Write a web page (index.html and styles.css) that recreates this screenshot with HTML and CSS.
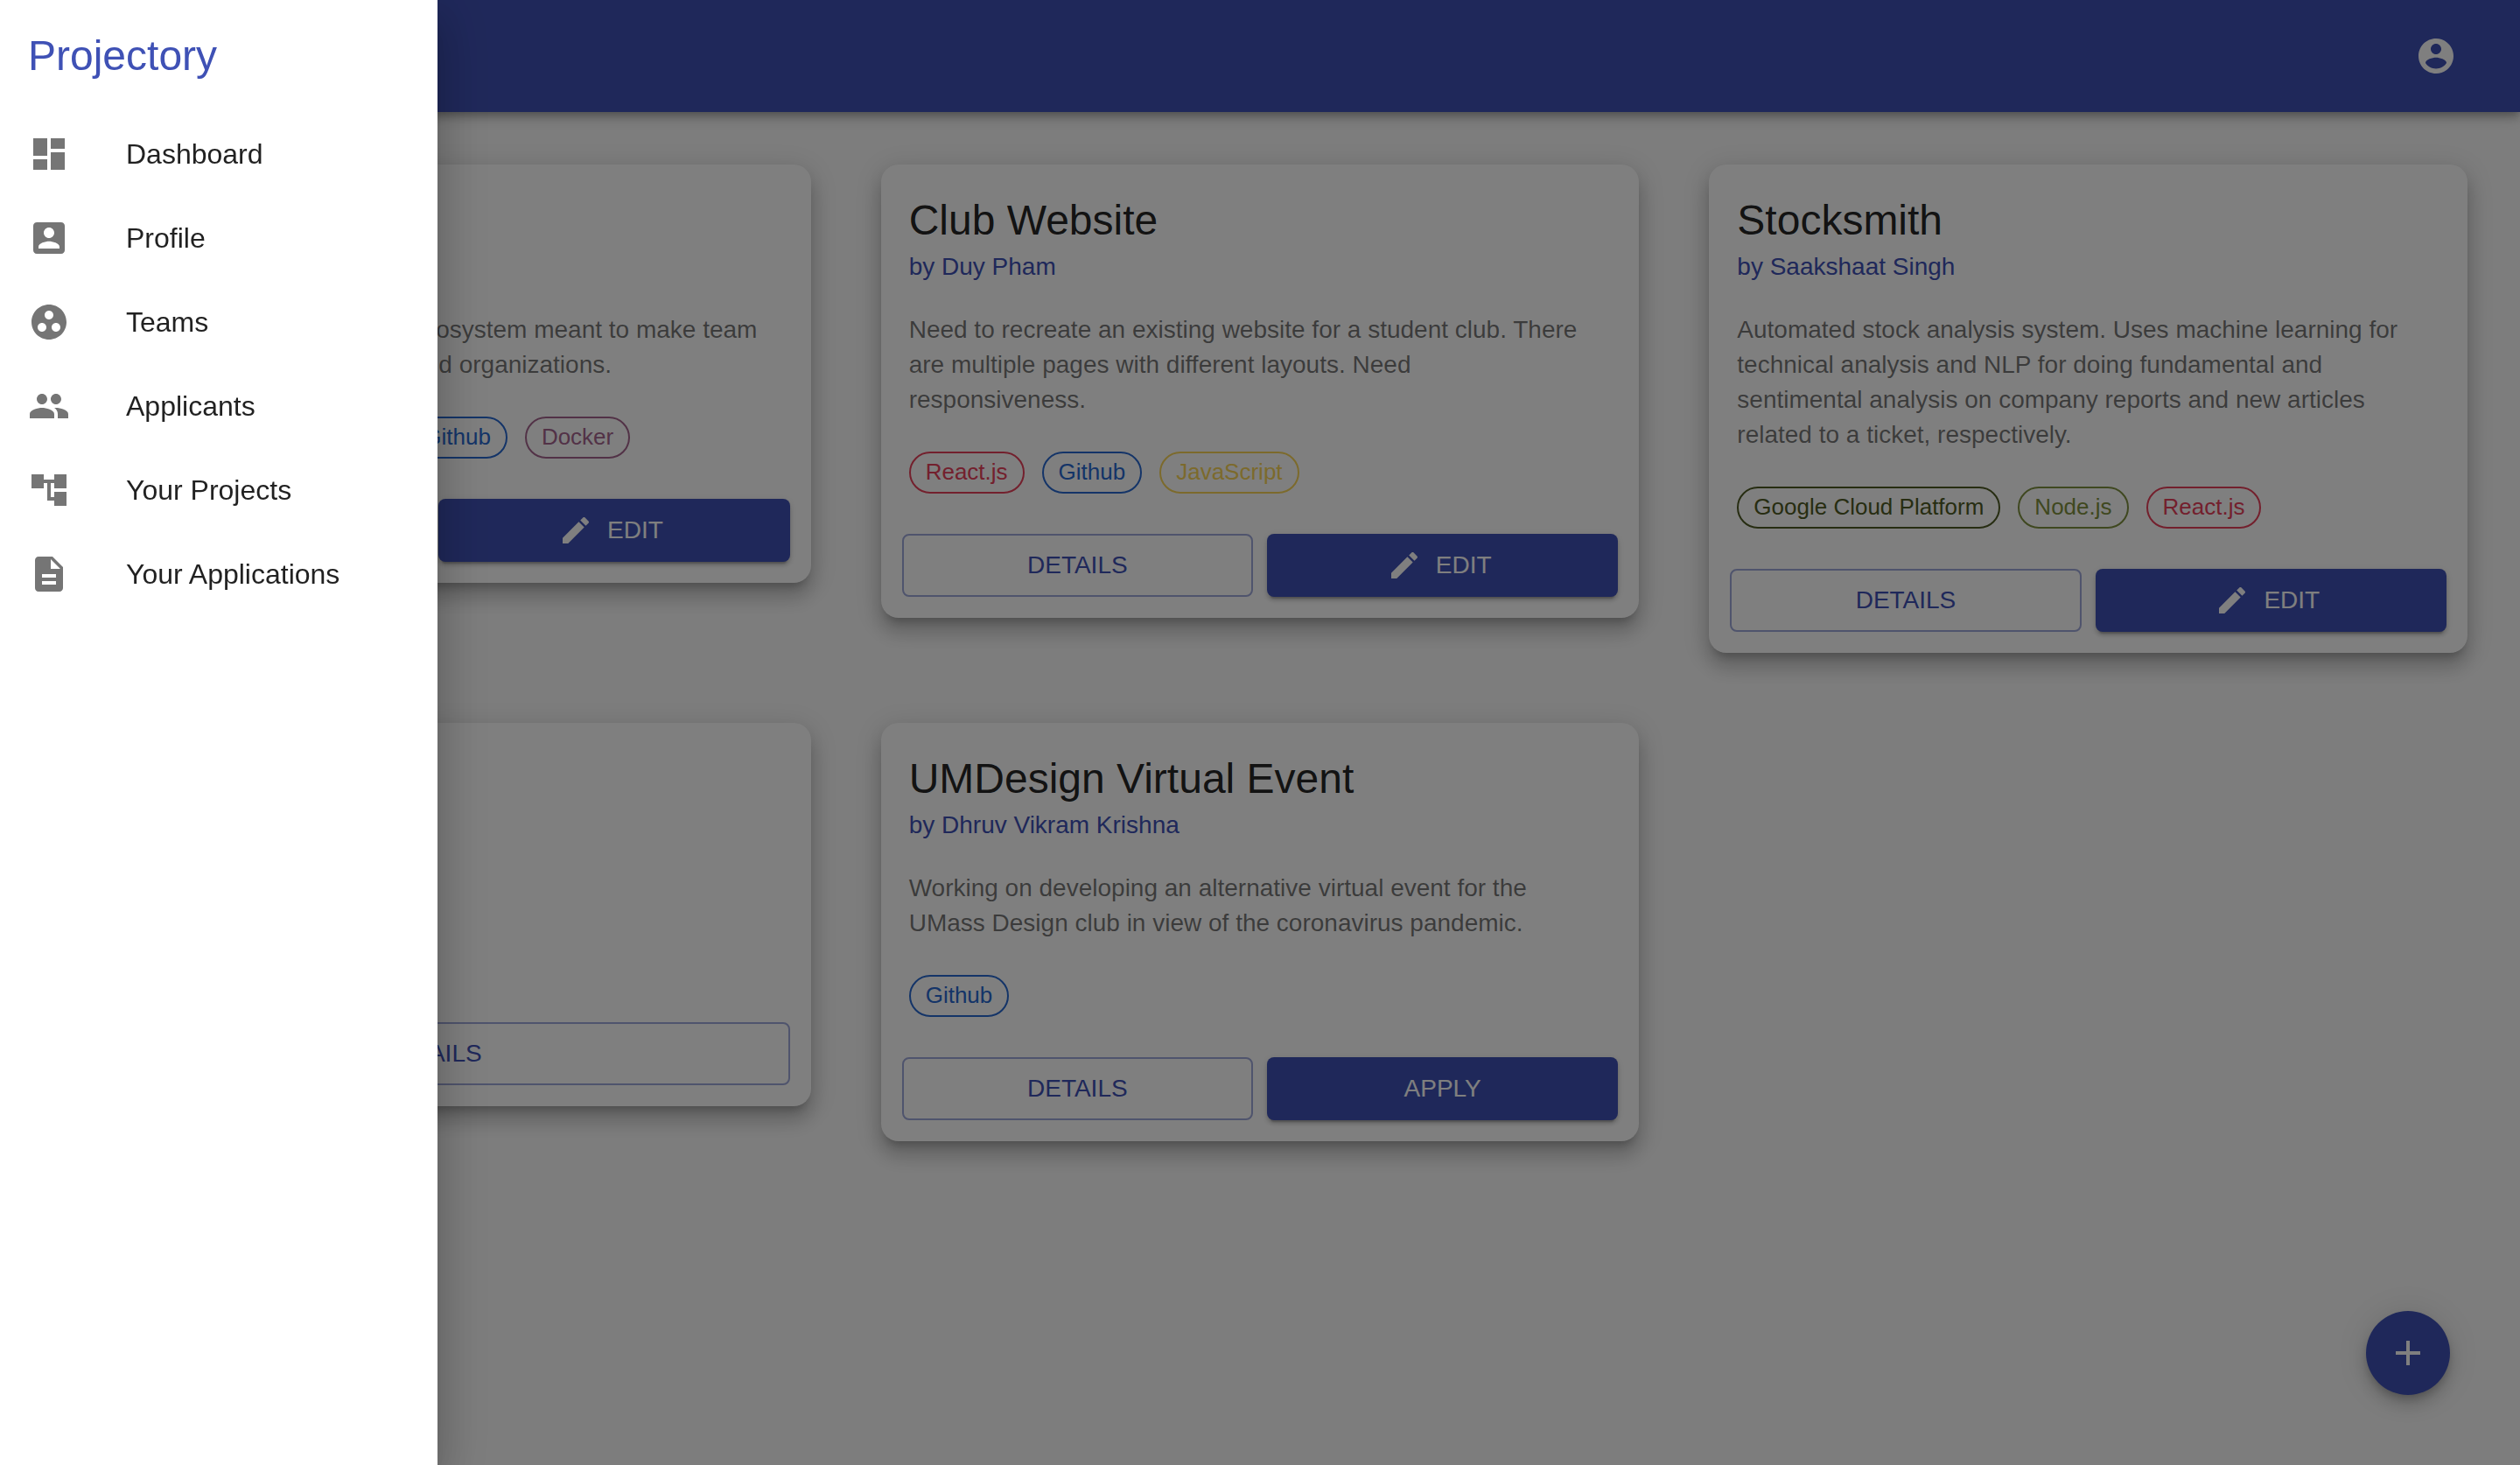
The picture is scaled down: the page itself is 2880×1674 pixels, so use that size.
FILE: index.html
```html
<!DOCTYPE html>
<html lang="en">
<head>
<meta charset="utf-8">
<title>Projectory</title>
<link rel="stylesheet" href="styles.css">
</head>
<body>
<svg class="sprite" aria-hidden="true">
  <symbol id="i-dashboard" viewBox="0 0 24 24"><path d="M3 13h8V3H3v10zm0 8h8v-6H3v6zm10 0h8V11h-8v10zm0-18v6h8V3h-8z"/></symbol>
  <symbol id="i-profile" viewBox="0 0 24 24"><path d="M3 5v14c0 1.1.89 2 2 2h14c1.1 0 2-.9 2-2V5c0-1.1-.9-2-2-2H5c-1.11 0-2 .9-2 2zm12 4c0 1.66-1.34 3-3 3s-3-1.34-3-3 1.34-3 3-3 3 1.34 3 3zm-9 8c0-2 4-3.1 6-3.1s6 1.1 6 3.1v1H6v-1z"/></symbol>
  <symbol id="i-teams" viewBox="0 0 24 24"><path d="M12 2C6.48 2 2 6.48 2 12s4.48 10 10 10 10-4.48 10-10S17.52 2 12 2zM8 17.5c-1.38 0-2.5-1.12-2.5-2.5s1.12-2.5 2.5-2.5 2.5 1.12 2.5 2.5-1.12 2.5-2.5 2.5zM9.5 8c0-1.38 1.12-2.5 2.5-2.5s2.5 1.12 2.5 2.5-1.12 2.5-2.5 2.5S9.5 9.38 9.5 8zm6.5 9.5c-1.38 0-2.5-1.12-2.5-2.5s1.12-2.5 2.5-2.5 2.5 1.12 2.5 2.5-1.12 2.5-2.5 2.5z"/></symbol>
  <symbol id="i-people" viewBox="0 0 24 24"><path d="M16 11c1.66 0 2.99-1.34 2.99-3S17.66 5 16 5c-1.66 0-3 1.34-3 3s1.34 3 3 3zm-8 0c1.66 0 2.99-1.34 2.99-3S9.66 5 8 5C6.34 5 5 6.34 5 8s1.34 3 3 3zm0 2c-2.33 0-7 1.17-7 3.5V19h14v-2.5c0-2.33-4.67-3.5-7-3.5zm8 0c-.29 0-.62.02-.97.05 1.16.84 1.97 1.97 1.97 3.45V19h6v-2.5c0-2.33-4.67-3.5-7-3.5z"/></symbol>
  <symbol id="i-tree" viewBox="0 0 24 24"><path d="M22 11V3h-7v3H9V3H2v8h7V8h2v10h4v3h7v-8h-7v3h-2V8h2v3z"/></symbol>
  <symbol id="i-file" viewBox="0 0 24 24"><path d="M14 2H6c-1.1 0-1.99.9-1.99 2L4 20c0 1.1.89 2 1.99 2H18c1.1 0 2-.9 2-2V8l-6-6zm2 16H8v-2h8v2zm0-4H8v-2h8v2zm-3-5V3.5L18.5 9H13z"/></symbol>
  <symbol id="i-account" viewBox="0 0 24 24"><path d="M12 2C6.48 2 2 6.48 2 12s4.48 10 10 10 10-4.48 10-10S17.52 2 12 2zm0 3c1.66 0 3 1.34 3 3s-1.34 3-3 3-3-1.34-3-3 1.34-3 3-3zm0 14.2c-2.5 0-4.71-1.28-6-3.22.03-1.99 4-3.08 6-3.08 1.99 0 5.97 1.09 6 3.08-1.29 1.94-3.5 3.22-6 3.22z"/></symbol>
  <symbol id="i-edit" viewBox="0 0 24 24"><path d="M3 17.25V21h3.75L17.81 9.94l-3.75-3.75L3 17.25zM20.71 7.04c.39-.39.39-1.02 0-1.41l-2.34-2.34c-.39-.39-1.02-.39-1.41 0l-1.83 1.83 3.75 3.75 1.83-1.83z"/></symbol>
  <symbol id="i-add" viewBox="0 0 24 24"><path d="M19 13h-6v6h-2v-6H5v-2h6V5h2v6h6v2z"/></symbol>
</svg>

<header class="app-bar">
  <button class="icon-button" type="button" aria-label="Account"><svg class="icon"><use href="#i-account"/></svg></button>
</header>

<main class="projects">
  <article class="card">
    <div class="card-body">
      <h2 class="card-title">Projectory</h2>
      <p class="card-author">by Saakshaat Singh</p>
      <p class="card-text">Projectory is a project sharing ecosystem meant to make team<br>hiring easy for students, clubs and organizations.</p>
      <ul class="chips">
        <li class="chip chip-javascript">JavaScript</li>
        <li class="chip chip-node">Spring Boot</li>
        <li class="chip chip-github">Github</li>
        <li class="chip chip-docker">Docker</li>
      </ul>
    </div>
    <div class="card-actions">
      <button class="button outlined" type="button">DETAILS</button>
      <button class="button contained" type="button"><svg class="button-icon"><use href="#i-edit"/></svg>EDIT</button>
    </div>
  </article>

  <article class="card">
    <div class="card-body">
      <h2 class="card-title">Club Website</h2>
      <p class="card-author">by Duy Pham</p>
      <p class="card-text">Need to recreate an existing website for a student club. There are multiple pages with different layouts. Need<br>responsiveness.</p>
      <ul class="chips">
        <li class="chip chip-react">React.js</li>
        <li class="chip chip-github">Github</li>
        <li class="chip chip-javascript">JavaScript</li>
      </ul>
    </div>
    <div class="card-actions">
      <button class="button outlined" type="button">DETAILS</button>
      <button class="button contained" type="button"><svg class="button-icon"><use href="#i-edit"/></svg>EDIT</button>
    </div>
  </article>

  <article class="card">
    <div class="card-body">
      <h2 class="card-title">Stocksmith</h2>
      <p class="card-author">by Saakshaat Singh</p>
      <p class="card-text">Automated stock analysis system. Uses machine learning for technical analysis and NLP for doing fundamental and<br>sentimental analysis on company reports and new articles related to a ticket, respectively.</p>
      <ul class="chips">
        <li class="chip chip-gcp">Google Cloud Platform</li>
        <li class="chip chip-node">Node.js</li>
        <li class="chip chip-react">React.js</li>
      </ul>
    </div>
    <div class="card-actions">
      <button class="button outlined" type="button">DETAILS</button>
      <button class="button contained" type="button"><svg class="button-icon"><use href="#i-edit"/></svg>EDIT</button>
    </div>
  </article>

  <article class="card">
    <div class="card-body">
      <h2 class="card-title">Dashboard</h2>
      <p class="card-author">by Duy Pham</p>
      <p class="card-text">A new project for students.</p>
      <ul class="chips">
        <li class="chip chip-react">React.js</li>
      </ul>
    </div>
    <div class="card-actions">
      <button class="button outlined" type="button">DETAILS</button>
    </div>
  </article>

  <article class="card">
    <div class="card-body">
      <h2 class="card-title">UMDesign Virtual Event</h2>
      <p class="card-author">by Dhruv Vikram Krishna</p>
      <p class="card-text">Working on developing an alternative virtual event for the<br>UMass Design club in view of the coronavirus pandemic.</p>
      <ul class="chips">
        <li class="chip chip-github">Github</li>
      </ul>
    </div>
    <div class="card-actions">
      <button class="button outlined" type="button">DETAILS</button>
      <button class="button contained" type="button">APPLY</button>
    </div>
  </article>
</main>

<button class="fab" type="button" aria-label="Add project"><svg class="icon"><use href="#i-add"/></svg></button>

<div class="backdrop"></div>

<aside class="drawer">
  <h1 class="drawer-title">Projectory</h1>
  <nav class="menu">
    <a class="menu-item" href="#dashboard"><svg class="icon"><use href="#i-dashboard"/></svg>Dashboard</a>
    <a class="menu-item" href="#profile"><svg class="icon"><use href="#i-profile"/></svg>Profile</a>
    <a class="menu-item" href="#teams"><svg class="icon"><use href="#i-teams"/></svg>Teams</a>
    <a class="menu-item" href="#applicants"><svg class="icon"><use href="#i-people"/></svg>Applicants</a>
    <a class="menu-item" href="#projects"><svg class="icon"><use href="#i-tree"/></svg>Your Projects</a>
    <a class="menu-item" href="#applications"><svg class="icon"><use href="#i-file"/></svg>Your Applications</a>
  </nav>
</aside>
</body>
</html>
```
FILE: styles.css
```css
:root {
  --primary: #3f51b5;
}

* {
  box-sizing: border-box;
}

body {
  margin: 0;
  background: #fafafa;
  color: rgba(0, 0, 0, 0.87);
  font-family: "Liberation Sans", Arial, Helvetica, sans-serif;
  font-size: 28px;
  line-height: 40px;
}

h1, h2, p, ul {
  margin: 0;
  padding: 0;
  font-weight: 400;
}

button {
  margin: 0;
  border: 0;
  font: inherit;
  cursor: pointer;
}

.sprite {
  display: none;
}

.icon {
  width: 48px;
  height: 48px;
  flex: none;
  fill: currentColor;
}

/* Top bar */
.app-bar {
  position: relative;
  display: flex;
  align-items: center;
  justify-content: flex-end;
  height: 128px;
  padding: 0 48px;
  background: var(--primary);
  color: #fff;
  box-shadow: 0 4px 8px -2px rgba(0, 0, 0, 0.2), 0 8px 10px 0 rgba(0, 0, 0, 0.14), 0 2px 20px 0 rgba(0, 0, 0, 0.12);
}

.icon-button {
  display: flex;
  padding: 24px;
  border-radius: 50%;
  background: transparent;
  color: inherit;
}

/* Project grid */
.projects {
  display: grid;
  grid-template-columns: repeat(3, minmax(0, 1fr));
  gap: 80px;
  align-items: start;
  padding: 60px;
}

.card {
  border-radius: 20px;
  background: #fff;
  box-shadow: 0 10px 10px -6px rgba(0, 0, 0, 0.2), 0 16px 20px 2px rgba(0, 0, 0, 0.14), 0 6px 28px 4px rgba(0, 0, 0, 0.12);
}

.card-body {
  padding: 32px 32px 22px;
}

.card-title {
  margin-bottom: 1px;
  font-size: 48px;
  line-height: 64px;
}

.card-author {
  color: var(--primary);
}

.card-text {
  margin: 32px 0 39px;
  color: rgba(0, 0, 0, 0.54);
}

.chips {
  display: flex;
  flex-wrap: wrap;
  gap: 20px;
  list-style: none;
}

.chip {
  height: 48px;
  padding: 0 17px;
  border: 2px solid currentColor;
  border-radius: 24px;
  font-size: 26px;
  line-height: 42px;
  white-space: nowrap;
}

.chip-react { color: #e7405a; }
.chip-github { color: #2869d0; }
.chip-javascript { color: #f8d558; }
.chip-docker { color: #a5658e; }
.chip-gcp { color: #4e5a24; }
.chip-node { color: #7f9040; }

.card-actions {
  display: grid;
  grid-auto-columns: minmax(0, 1fr);
  grid-auto-flow: column;
  gap: 16px;
  padding: 24px;
}

.button {
  display: flex;
  align-items: center;
  justify-content: center;
  height: 72px;
  padding: 0 32px;
  border-radius: 8px;
}

.outlined {
  border: 2px solid rgba(63, 81, 181, 0.5);
  background: transparent;
  color: var(--primary);
}

.contained {
  background: var(--primary);
  color: #fff;
  box-shadow: 0 6px 2px -4px rgba(0, 0, 0, 0.2), 0 4px 4px 0 rgba(0, 0, 0, 0.14), 0 2px 10px 0 rgba(0, 0, 0, 0.12);
}

.button-icon {
  width: 40px;
  height: 40px;
  margin: 0 16px 0 -8px;
  fill: currentColor;
}

/* Floating add button */
.fab {
  position: fixed;
  right: 80px;
  bottom: 80px;
  display: flex;
  align-items: center;
  justify-content: center;
  width: 96px;
  height: 96px;
  padding: 0;
  border-radius: 50%;
  background: var(--primary);
  color: #fff;
  box-shadow: 0 6px 10px -2px rgba(0, 0, 0, 0.2), 0 12px 20px 0 rgba(0, 0, 0, 0.14), 0 2px 36px 0 rgba(0, 0, 0, 0.12);
}

/* Open drawer over the page */
.backdrop {
  position: fixed;
  inset: 0;
  background: rgba(0, 0, 0, 0.5);
}

.drawer {
  position: fixed;
  top: 0;
  bottom: 0;
  left: 0;
  width: 500px;
  overflow-y: auto;
  background: #fff;
  box-shadow: 0 16px 20px -10px rgba(0, 0, 0, 0.2), 0 32px 48px 4px rgba(0, 0, 0, 0.14), 0 12px 60px 10px rgba(0, 0, 0, 0.12);
}

.drawer-title {
  padding: 32px;
  color: var(--primary);
  font-size: 48px;
  line-height: 64px;
}

.menu-item {
  display: flex;
  align-items: center;
  gap: 64px;
  height: 96px;
  padding: 0 32px;
  color: inherit;
  font-size: 32px;
  line-height: 48px;
  text-decoration: none;
}

.menu-item .icon {
  color: rgba(0, 0, 0, 0.54);
}
```
